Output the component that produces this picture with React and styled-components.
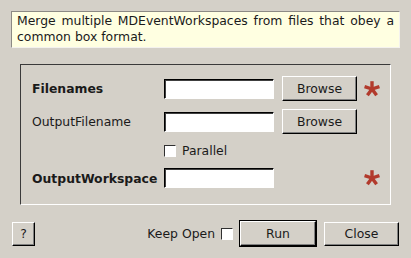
import styled, { createGlobalStyle } from 'styled-components';

const Global = createGlobalStyle`
    html, body {
        margin: 0;
        padding: 0;
        background: #d4d0c8;
    }
    body {
        font-family: "DejaVu Sans", "Liberation Sans", sans-serif;
        font-size: 12.4px;
        color: #1a1a1a;
    }
`;

const Dialog = styled.div`
    width: 411px;
    height: 258px;
    box-sizing: border-box;
    padding-top: 11px;
    background: #d4d0c8;
`;

const Description = styled.div`
    margin: 0 11px;
    height: 37px;
    box-sizing: border-box;
    padding: 1px 5px 0;
    background: #ffffe1;
    border: 1px solid;
    border-color: #8c8a85 #f4f2ee #f4f2ee #8c8a85;
    line-height: 16px;
    text-align: justify;
`;

const GroupBox = styled.div`
    margin: 16px 20px 0;
    box-sizing: border-box;
    height: 141px;
    padding: 11px 0 14px 11px;
    border: 1px solid;
    border-color: #3a3a3a #ffffff #ffffff #3a3a3a;
    display: grid;
    grid-template-columns: 132px 118px 82px 16px;
    grid-template-rows: 25px 25px 16px 24px;
    row-gap: 8px;
    align-items: center;
`;

const Label = styled.div`
    font-weight: ${(p) => (p.$required ? 'bold' : 'normal')};
    white-space: nowrap;
`;

const TextInput = styled.div`
    width: 110px;
    height: 20px;
    box-sizing: border-box;
    background: #fff;
    border: 1px solid;
    border-color: #000 #fff #fff #000;
    box-shadow: inset 1px 1px 0 #404040;
`;

const Button = styled.button`
    font-family: inherit;
    font-size: 12.4px;
    color: #1a1a1a;
    width: ${(p) => p.$w}px;
    height: ${(p) => p.$h || 25}px;
    padding: 0;
    box-sizing: border-box;
    background: #d4d0c8;
    border: 1px solid;
    border-color: #ffffff #000 #000 #ffffff;
    box-shadow: inset -1px -1px 0 #808080;
    outline: ${(p) => (p.$default ? '1px solid #000' : 'none')};
    outline-offset: 0;
`;

const Check = styled.span`
    display: inline-block;
    width: 12px;
    height: 12px;
    box-sizing: border-box;
    background: #fff;
    border: 1px solid;
    border-color: #303030 #fff #fff #303030;
`;

const CheckRow = styled.label`
    display: flex;
    align-items: center;
    gap: 6px;
    padding-top: 1px;
`;

const Footer = styled.div`
    margin-top: 16px;
    padding: 0 12px;
    display: flex;
    align-items: center;
    height: 25px;
`;

const KeepOpen = styled.label`
    margin-left: auto;
    display: flex;
    align-items: center;
    gap: 6px;
    margin-right: 7px;
`;

const Buttons = styled.div`
    display: flex;
    gap: 8px;
    align-items: center;
`;

const Star = () => (
    <svg width="16" height="16" viewBox="-8 -8 16 16">
        <g stroke="#b23a2c" strokeWidth="3.4" strokeLinecap="butt">
            {[-90, -18, 54, 126, 198].map((a) => (
                <line
                    key={a}
                    x1="0"
                    y1="0"
                    x2={7.8 * Math.cos((a * Math.PI) / 180)}
                    y2={7.8 * Math.sin((a * Math.PI) / 180)}
                />
            ))}
        </g>
    </svg>
);

export default function App() {
    return (
        <Dialog>
            <Global />
            <Description>
                Merge multiple MDEventWorkspaces from files that obey a common box format.
            </Description>
            <GroupBox>
                <Label $required>Filenames</Label>
                <TextInput />
                <Button $w={75}>Browse</Button>
                <Star />

                <Label>OutputFilename</Label>
                <TextInput />
                <Button $w={75}>Browse</Button>
                <span />

                <span />
                <CheckRow>
                    <Check />
                    Parallel
                </CheckRow>
                <span />
                <span />

                <Label $required>OutputWorkspace</Label>
                <TextInput />
                <span />
                <Star />
            </GroupBox>
            <Footer>
                <Button $w={23} $h={24}>?</Button>
                <KeepOpen>
                    Keep Open
                    <Check />
                </KeepOpen>
                <Buttons>
                    <Button $w={76} $default>Run</Button>
                    <Button $w={75} $h={24}>Close</Button>
                </Buttons>
            </Footer>
        </Dialog>
    );
}
